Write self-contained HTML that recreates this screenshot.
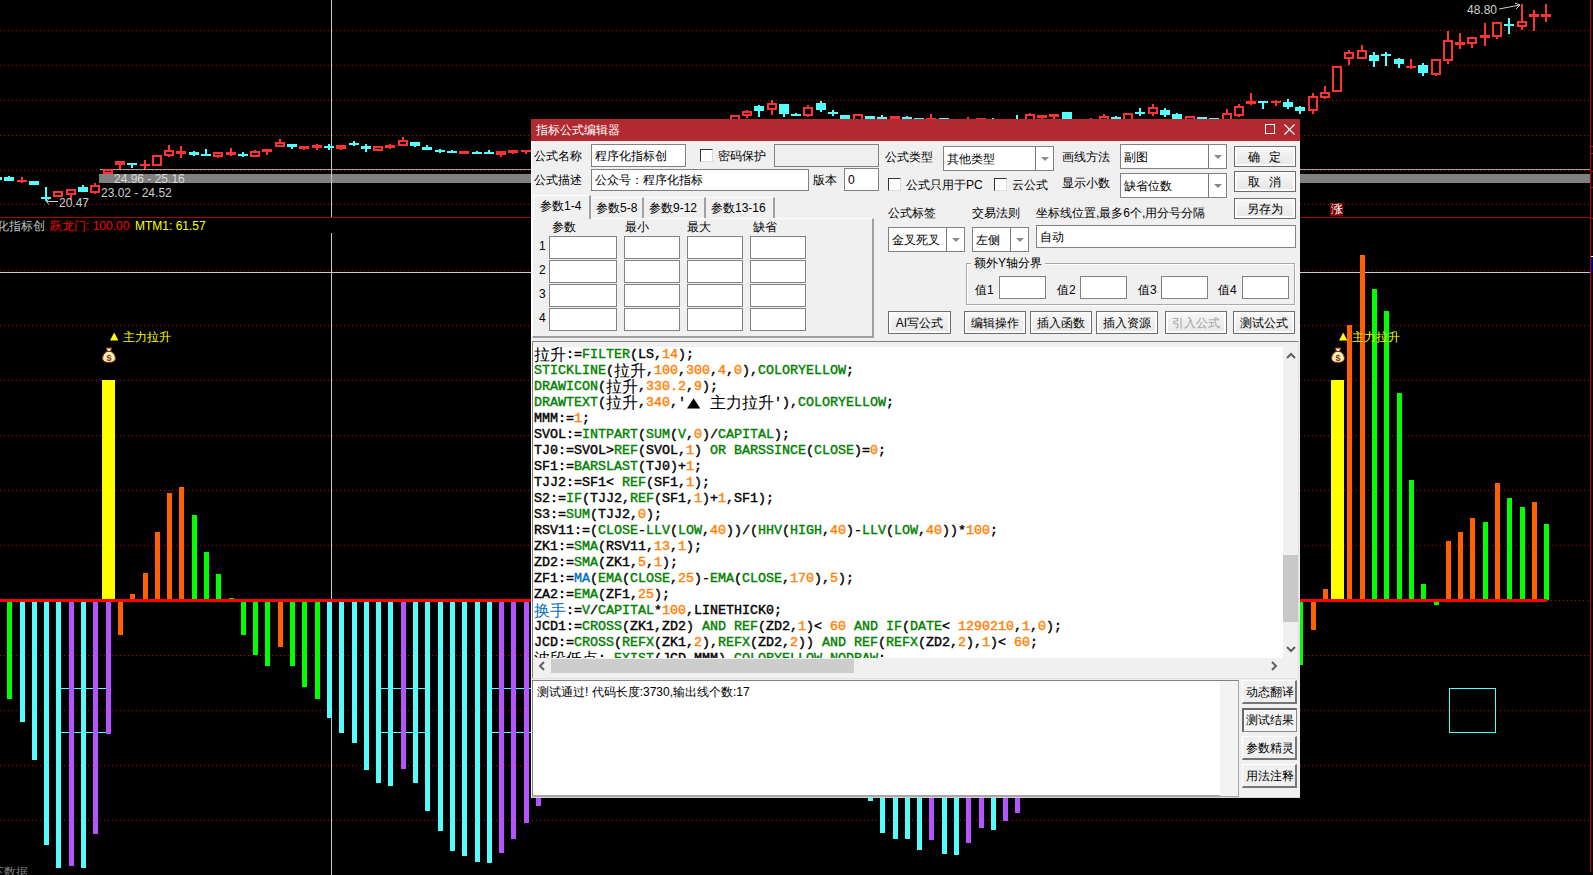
<!DOCTYPE html>
<html><head><meta charset="utf-8"><style>
html,body{margin:0;padding:0;}
body{width:1593px;height:875px;background:#000;position:relative;overflow:hidden;font-family:"Liberation Sans", sans-serif;font-size:12px;}
.t{position:absolute;white-space:nowrap;color:#000;font-size:12px;}
.ct{position:absolute;white-space:nowrap;font-size:11px;}
.code{font-family:"Liberation Mono",monospace;font-size:13.33px;color:#000;-webkit-text-stroke:0.4px currentColor;}
.cl{height:16px;line-height:16px;white-space:pre;}
.cj{display:inline-block;width:16px;font-family:"Liberation Sans",sans-serif;font-size:16px;vertical-align:top;-webkit-text-stroke:0;}
</style></head><body>
<svg width="1593" height="875" style="position:absolute;left:0;top:0" shape-rendering="crispEdges">
<line x1="0" y1="30.5" x2="1590" y2="30.5" stroke="#c00000" stroke-width="1" stroke-dasharray="1 3"/>
<line x1="0" y1="65.5" x2="1590" y2="65.5" stroke="#c00000" stroke-width="1" stroke-dasharray="1 3"/>
<line x1="0" y1="100.5" x2="1590" y2="100.5" stroke="#c00000" stroke-width="1" stroke-dasharray="1 3"/>
<line x1="0" y1="135.5" x2="1590" y2="135.5" stroke="#c00000" stroke-width="1" stroke-dasharray="1 3"/>
<line x1="0" y1="170.5" x2="1590" y2="170.5" stroke="#c00000" stroke-width="1" stroke-dasharray="1 3"/>
<line x1="0" y1="204.5" x2="1590" y2="204.5" stroke="#c00000" stroke-width="1" stroke-dasharray="1 3"/>
<line x1="0" y1="270.5" x2="1590" y2="270.5" stroke="#c00000" stroke-width="1" stroke-dasharray="1 3"/>
<line x1="0" y1="325.5" x2="1590" y2="325.5" stroke="#c00000" stroke-width="1" stroke-dasharray="1 3"/>
<line x1="0" y1="380.5" x2="1590" y2="380.5" stroke="#c00000" stroke-width="1" stroke-dasharray="1 3"/>
<line x1="0" y1="435.5" x2="1590" y2="435.5" stroke="#c00000" stroke-width="1" stroke-dasharray="1 3"/>
<line x1="0" y1="490.5" x2="1590" y2="490.5" stroke="#c00000" stroke-width="1" stroke-dasharray="1 3"/>
<line x1="0" y1="545.5" x2="1590" y2="545.5" stroke="#c00000" stroke-width="1" stroke-dasharray="1 3"/>
<line x1="0" y1="655.5" x2="1590" y2="655.5" stroke="#c00000" stroke-width="1" stroke-dasharray="1 3"/>
<line x1="0" y1="710.5" x2="1590" y2="710.5" stroke="#c00000" stroke-width="1" stroke-dasharray="1 3"/>
<line x1="0" y1="765.5" x2="1590" y2="765.5" stroke="#c00000" stroke-width="1" stroke-dasharray="1 3"/>
<line x1="0" y1="820.5" x2="1590" y2="820.5" stroke="#c00000" stroke-width="1" stroke-dasharray="1 3"/>
<rect x="0" y="217" width="1590" height="1" fill="#b00000"/>
<rect x="1590" y="0" width="1" height="872" fill="#b00000"/>
<rect x="100" y="169" width="1490" height="1" fill="#a0a0a0"/>
<rect x="99" y="174" width="1491" height="9" fill="#808080"/>
<rect x="331" y="0" width="1" height="217" fill="#c8c8c8"/>
<rect x="331" y="233" width="1" height="642" fill="#c8c8c8"/>
<rect x="0" y="272" width="1590" height="1" fill="#c8c8c8"/>
<rect x="-8" y="177" width="10" height="3" fill="#54ffff"/>
<rect x="8" y="176" width="2" height="1" fill="#54ffff"/>
<rect x="4" y="177" width="10" height="4" fill="#54ffff"/>
<rect x="21" y="177" width="2" height="3" fill="#ff3232"/>
<rect x="21" y="182" width="2" height="1" fill="#ff3232"/>
<rect x="17" y="180" width="10" height="2" fill="#ff3232"/>
<rect x="29" y="181" width="10" height="4" fill="#54ffff"/>
<rect x="45" y="187" width="2" height="10" fill="#54ffff"/>
<rect x="45" y="199" width="2" height="2" fill="#54ffff"/>
<rect x="41" y="197" width="10" height="2" fill="#54ffff"/>
<path d="M53 191h10v6h-10zM55 193v2h6v-2z" fill="#ff3232" fill-rule="evenodd"/>
<rect x="70" y="195" width="2" height="5" fill="#ff3232"/>
<path d="M66 189h10v6h-10zM68 191v2h6v-2z" fill="#ff3232" fill-rule="evenodd"/>
<rect x="82" y="185" width="2" height="2" fill="#54ffff"/>
<rect x="78" y="187" width="10" height="5" fill="#54ffff"/>
<rect x="94" y="183" width="2" height="2" fill="#ff3232"/>
<rect x="94" y="193" width="2" height="1" fill="#ff3232"/>
<path d="M90 185h10v8h-10zM92 187v4h6v-4z" fill="#ff3232" fill-rule="evenodd"/>
<path d="M103 169h10v5h-10zM105 171v1h6v-1z" fill="#ff3232" fill-rule="evenodd"/>
<rect x="119" y="165" width="2" height="4" fill="#ff3232"/>
<path d="M115 161h10v4h-10zM117 163v0h6v0z" fill="#ff3232" fill-rule="evenodd"/>
<rect x="131" y="165" width="2" height="3" fill="#54ffff"/>
<rect x="127" y="163" width="10" height="2" fill="#54ffff"/>
<rect x="144" y="160" width="2" height="4" fill="#ff3232"/>
<rect x="144" y="166" width="2" height="3" fill="#ff3232"/>
<rect x="140" y="164" width="10" height="2" fill="#ff3232"/>
<path d="M152 155h10v11h-10zM154 157v7h6v-7z" fill="#ff3232" fill-rule="evenodd"/>
<rect x="168" y="145" width="2" height="5" fill="#ff3232"/>
<rect x="168" y="156" width="2" height="1" fill="#ff3232"/>
<path d="M164 150h10v6h-10zM166 152v2h6v-2z" fill="#ff3232" fill-rule="evenodd"/>
<rect x="180" y="146" width="2" height="5" fill="#ff3232"/>
<rect x="180" y="154" width="2" height="4" fill="#ff3232"/>
<rect x="176" y="151" width="10" height="3" fill="#ff3232"/>
<rect x="193" y="151" width="2" height="1" fill="#54ffff"/>
<rect x="193" y="155" width="2" height="1" fill="#54ffff"/>
<rect x="189" y="152" width="10" height="3" fill="#54ffff"/>
<rect x="205" y="149" width="2" height="5" fill="#54ffff"/>
<rect x="205" y="156" width="2" height="0" fill="#54ffff"/>
<rect x="201" y="154" width="10" height="2" fill="#54ffff"/>
<rect x="217" y="157" width="2" height="1" fill="#ff3232"/>
<path d="M213 152h10v5h-10zM215 154v1h6v-1z" fill="#ff3232" fill-rule="evenodd"/>
<rect x="230" y="148" width="2" height="4" fill="#ff3232"/>
<rect x="230" y="155" width="2" height="1" fill="#ff3232"/>
<rect x="226" y="152" width="10" height="3" fill="#ff3232"/>
<rect x="242" y="152" width="2" height="2" fill="#54ffff"/>
<rect x="242" y="156" width="2" height="1" fill="#54ffff"/>
<rect x="238" y="154" width="10" height="2" fill="#54ffff"/>
<rect x="254" y="150" width="2" height="1" fill="#ff3232"/>
<path d="M250 151h10v6h-10zM252 153v2h6v-2z" fill="#ff3232" fill-rule="evenodd"/>
<rect x="266" y="152" width="2" height="3" fill="#ff3232"/>
<rect x="262" y="149" width="10" height="3" fill="#ff3232"/>
<rect x="279" y="139" width="2" height="3" fill="#ff3232"/>
<path d="M275 142h10v5h-10zM277 144v1h6v-1z" fill="#ff3232" fill-rule="evenodd"/>
<rect x="291" y="147" width="2" height="2" fill="#54ffff"/>
<rect x="287" y="144" width="10" height="3" fill="#54ffff"/>
<rect x="303" y="149" width="2" height="1" fill="#ff3232"/>
<rect x="299" y="146" width="10" height="3" fill="#ff3232"/>
<rect x="316" y="144" width="2" height="1" fill="#ff3232"/>
<rect x="316" y="148" width="2" height="2" fill="#ff3232"/>
<rect x="312" y="145" width="10" height="3" fill="#ff3232"/>
<rect x="328" y="144" width="2" height="2" fill="#54ffff"/>
<rect x="328" y="148" width="2" height="2" fill="#54ffff"/>
<rect x="324" y="146" width="10" height="2" fill="#54ffff"/>
<rect x="340" y="149" width="2" height="1" fill="#ff3232"/>
<rect x="336" y="145" width="10" height="4" fill="#ff3232"/>
<rect x="353" y="141" width="2" height="2" fill="#54ffff"/>
<rect x="353" y="145" width="2" height="1" fill="#54ffff"/>
<rect x="349" y="143" width="10" height="2" fill="#54ffff"/>
<rect x="365" y="144" width="2" height="2" fill="#54ffff"/>
<rect x="365" y="149" width="2" height="3" fill="#54ffff"/>
<rect x="361" y="146" width="10" height="3" fill="#54ffff"/>
<path d="M373 146h10v5h-10zM375 148v1h6v-1z" fill="#ff3232" fill-rule="evenodd"/>
<rect x="389" y="144" width="2" height="1" fill="#ff3232"/>
<rect x="389" y="148" width="2" height="1" fill="#ff3232"/>
<rect x="385" y="145" width="10" height="3" fill="#ff3232"/>
<rect x="402" y="137" width="2" height="3" fill="#ff3232"/>
<path d="M398 140h10v6h-10zM400 142v2h6v-2z" fill="#ff3232" fill-rule="evenodd"/>
<rect x="414" y="146" width="2" height="1" fill="#54ffff"/>
<rect x="410" y="142" width="10" height="4" fill="#54ffff"/>
<rect x="426" y="145" width="2" height="2" fill="#54ffff"/>
<rect x="422" y="147" width="10" height="3" fill="#54ffff"/>
<rect x="439" y="149" width="2" height="1" fill="#54ffff"/>
<rect x="439" y="152" width="2" height="1" fill="#54ffff"/>
<rect x="435" y="150" width="10" height="2" fill="#54ffff"/>
<rect x="451" y="150" width="2" height="1" fill="#54ffff"/>
<rect x="447" y="151" width="10" height="2" fill="#54ffff"/>
<rect x="459" y="151" width="10" height="3" fill="#ff3232"/>
<rect x="476" y="151" width="2" height="1" fill="#54ffff"/>
<rect x="476" y="154" width="2" height="0" fill="#54ffff"/>
<rect x="472" y="152" width="10" height="2" fill="#54ffff"/>
<rect x="488" y="150" width="2" height="2" fill="#54ffff"/>
<rect x="484" y="152" width="10" height="2" fill="#54ffff"/>
<rect x="500" y="155" width="2" height="2" fill="#ff3232"/>
<rect x="496" y="151" width="10" height="4" fill="#ff3232"/>
<rect x="512" y="153" width="2" height="1" fill="#ff3232"/>
<rect x="508" y="150" width="10" height="3" fill="#ff3232"/>
<rect x="525" y="150" width="2" height="0" fill="#ff3232"/>
<rect x="525" y="152" width="2" height="2" fill="#ff3232"/>
<rect x="521" y="150" width="10" height="2" fill="#ff3232"/>
<path d="M730 115h10v10h-10zM732 117v6h6v-6z" fill="#ff3232" fill-rule="evenodd"/>
<rect x="746" y="110" width="2" height="1" fill="#ff3232"/>
<rect x="746" y="116" width="2" height="2" fill="#ff3232"/>
<path d="M742 111h10v5h-10zM744 113v1h6v-1z" fill="#ff3232" fill-rule="evenodd"/>
<rect x="758" y="105" width="2" height="1" fill="#54ffff"/>
<rect x="758" y="111" width="2" height="6" fill="#54ffff"/>
<rect x="754" y="106" width="10" height="5" fill="#54ffff"/>
<rect x="771" y="100" width="2" height="3" fill="#ff3232"/>
<rect x="771" y="110" width="2" height="5" fill="#ff3232"/>
<path d="M767 103h10v7h-10zM769 105v3h6v-3z" fill="#ff3232" fill-rule="evenodd"/>
<rect x="783" y="114" width="2" height="3" fill="#54ffff"/>
<rect x="779" y="104" width="10" height="10" fill="#54ffff"/>
<rect x="795" y="113" width="2" height="1" fill="#54ffff"/>
<rect x="795" y="116" width="2" height="0" fill="#54ffff"/>
<rect x="791" y="114" width="10" height="2" fill="#54ffff"/>
<rect x="807" y="105" width="2" height="2" fill="#ff3232"/>
<rect x="807" y="116" width="2" height="1" fill="#ff3232"/>
<path d="M803 107h10v9h-10zM805 109v5h6v-5z" fill="#ff3232" fill-rule="evenodd"/>
<rect x="820" y="101" width="2" height="2" fill="#54ffff"/>
<rect x="820" y="110" width="2" height="2" fill="#54ffff"/>
<rect x="816" y="103" width="10" height="7" fill="#54ffff"/>
<rect x="832" y="110" width="2" height="2" fill="#54ffff"/>
<rect x="832" y="114" width="2" height="2" fill="#54ffff"/>
<rect x="828" y="112" width="10" height="2" fill="#54ffff"/>
<rect x="840" y="115" width="10" height="10" fill="#54ffff"/>
<path d="M853 114h10v11h-10zM855 116v7h6v-7z" fill="#ff3232" fill-rule="evenodd"/>
<rect x="865" y="116" width="10" height="9" fill="#54ffff"/>
<rect x="881" y="115" width="2" height="2" fill="#54ffff"/>
<rect x="877" y="117" width="10" height="8" fill="#54ffff"/>
<rect x="890" y="116" width="10" height="9" fill="#ff3232"/>
<rect x="906" y="116" width="2" height="1" fill="#54ffff"/>
<rect x="906" y="119" width="2" height="6" fill="#54ffff"/>
<rect x="902" y="117" width="10" height="2" fill="#54ffff"/>
<rect x="914" y="118" width="10" height="7" fill="#54ffff"/>
<rect x="930" y="114" width="2" height="4" fill="#ff3232"/>
<rect x="926" y="118" width="10" height="7" fill="#ff3232"/>
<rect x="939" y="118" width="10" height="7" fill="#54ffff"/>
<rect x="967" y="117" width="2" height="8" fill="#ff3232"/>
<rect x="976" y="118" width="10" height="7" fill="#ff3232"/>
<rect x="992" y="118" width="2" height="7" fill="#54ffff"/>
<rect x="1016" y="115" width="2" height="10" fill="#54ffff"/>
<rect x="1029" y="113" width="2" height="1" fill="#ff3232"/>
<path d="M1025 114h10v11h-10zM1027 116v7h6v-7z" fill="#ff3232" fill-rule="evenodd"/>
<rect x="1041" y="118" width="2" height="7" fill="#ff3232"/>
<rect x="1037" y="115" width="10" height="3" fill="#ff3232"/>
<rect x="1053" y="117" width="2" height="8" fill="#ff3232"/>
<rect x="1049" y="114" width="10" height="3" fill="#ff3232"/>
<rect x="1062" y="112" width="10" height="13" fill="#54ffff"/>
<rect x="1090" y="118" width="2" height="7" fill="#ff3232"/>
<rect x="1103" y="114" width="2" height="2" fill="#ff3232"/>
<path d="M1099 116h10v9h-10zM1101 118v5h6v-5z" fill="#ff3232" fill-rule="evenodd"/>
<rect x="1115" y="116" width="2" height="1" fill="#54ffff"/>
<rect x="1115" y="119" width="2" height="6" fill="#54ffff"/>
<rect x="1111" y="117" width="10" height="2" fill="#54ffff"/>
<path d="M1123 113h10v12h-10zM1125 115v8h6v-8z" fill="#ff3232" fill-rule="evenodd"/>
<rect x="1139" y="108" width="2" height="4" fill="#54ffff"/>
<rect x="1139" y="114" width="2" height="2" fill="#54ffff"/>
<rect x="1135" y="112" width="10" height="2" fill="#54ffff"/>
<rect x="1152" y="104" width="2" height="3" fill="#ff3232"/>
<rect x="1152" y="114" width="2" height="2" fill="#ff3232"/>
<path d="M1148 107h10v7h-10zM1150 109v3h6v-3z" fill="#ff3232" fill-rule="evenodd"/>
<rect x="1164" y="108" width="2" height="2" fill="#54ffff"/>
<rect x="1164" y="115" width="2" height="2" fill="#54ffff"/>
<rect x="1160" y="110" width="10" height="5" fill="#54ffff"/>
<rect x="1176" y="113" width="2" height="1" fill="#54ffff"/>
<rect x="1172" y="114" width="10" height="11" fill="#54ffff"/>
<path d="M1185 116h10v9h-10zM1187 118v5h6v-5z" fill="#ff3232" fill-rule="evenodd"/>
<rect x="1197" y="117" width="10" height="8" fill="#54ffff"/>
<rect x="1209" y="118" width="10" height="7" fill="#54ffff"/>
<rect x="1226" y="109" width="2" height="4" fill="#ff3232"/>
<path d="M1222 113h10v12h-10zM1224 115v8h6v-8z" fill="#ff3232" fill-rule="evenodd"/>
<rect x="1238" y="104" width="2" height="2" fill="#ff3232"/>
<rect x="1238" y="116" width="2" height="1" fill="#ff3232"/>
<path d="M1234 106h10v10h-10zM1236 108v6h6v-6z" fill="#ff3232" fill-rule="evenodd"/>
<rect x="1250" y="93" width="2" height="8" fill="#ff3232"/>
<rect x="1250" y="104" width="2" height="1" fill="#ff3232"/>
<rect x="1246" y="101" width="10" height="3" fill="#ff3232"/>
<rect x="1262" y="103" width="2" height="6" fill="#54ffff"/>
<rect x="1258" y="101" width="10" height="2" fill="#54ffff"/>
<rect x="1275" y="100" width="2" height="1" fill="#ff3232"/>
<rect x="1275" y="103" width="2" height="3" fill="#ff3232"/>
<rect x="1271" y="101" width="10" height="2" fill="#ff3232"/>
<rect x="1287" y="99" width="2" height="3" fill="#54ffff"/>
<rect x="1287" y="107" width="2" height="2" fill="#54ffff"/>
<rect x="1283" y="102" width="10" height="5" fill="#54ffff"/>
<rect x="1299" y="106" width="2" height="1" fill="#54ffff"/>
<rect x="1299" y="111" width="2" height="3" fill="#54ffff"/>
<rect x="1295" y="107" width="10" height="4" fill="#54ffff"/>
<rect x="1312" y="93" width="2" height="3" fill="#ff3232"/>
<rect x="1312" y="111" width="2" height="3" fill="#ff3232"/>
<path d="M1308 96h10v15h-10zM1310 98v11h6v-11z" fill="#ff3232" fill-rule="evenodd"/>
<rect x="1324" y="86" width="2" height="6" fill="#ff3232"/>
<rect x="1324" y="98" width="2" height="1" fill="#ff3232"/>
<path d="M1320 92h10v6h-10zM1322 94v2h6v-2z" fill="#ff3232" fill-rule="evenodd"/>
<path d="M1332 66h10v26h-10zM1334 68v22h6v-22z" fill="#ff3232" fill-rule="evenodd"/>
<rect x="1348" y="50" width="2" height="2" fill="#ff3232"/>
<rect x="1348" y="59" width="2" height="6" fill="#ff3232"/>
<path d="M1344 52h10v7h-10zM1346 54v3h6v-3z" fill="#ff3232" fill-rule="evenodd"/>
<rect x="1361" y="45" width="2" height="5" fill="#ff3232"/>
<path d="M1357 50h10v9h-10zM1359 52v5h6v-5z" fill="#ff3232" fill-rule="evenodd"/>
<rect x="1373" y="52" width="2" height="3" fill="#54ffff"/>
<rect x="1373" y="61" width="2" height="6" fill="#54ffff"/>
<rect x="1369" y="55" width="10" height="6" fill="#54ffff"/>
<rect x="1385" y="52" width="2" height="2" fill="#54ffff"/>
<rect x="1385" y="56" width="2" height="10" fill="#54ffff"/>
<rect x="1381" y="54" width="10" height="2" fill="#54ffff"/>
<rect x="1398" y="58" width="2" height="1" fill="#54ffff"/>
<rect x="1398" y="64" width="2" height="4" fill="#54ffff"/>
<rect x="1394" y="59" width="10" height="5" fill="#54ffff"/>
<rect x="1410" y="59" width="2" height="7" fill="#ff3232"/>
<rect x="1410" y="68" width="2" height="1" fill="#ff3232"/>
<rect x="1406" y="66" width="10" height="2" fill="#ff3232"/>
<rect x="1422" y="63" width="2" height="2" fill="#54ffff"/>
<rect x="1422" y="73" width="2" height="3" fill="#54ffff"/>
<rect x="1418" y="65" width="10" height="8" fill="#54ffff"/>
<rect x="1435" y="75" width="2" height="1" fill="#ff3232"/>
<path d="M1431 59h10v16h-10zM1433 61v12h6v-12z" fill="#ff3232" fill-rule="evenodd"/>
<rect x="1447" y="31" width="2" height="9" fill="#ff3232"/>
<rect x="1447" y="61" width="2" height="3" fill="#ff3232"/>
<path d="M1443 40h10v21h-10zM1445 42v17h6v-17z" fill="#ff3232" fill-rule="evenodd"/>
<rect x="1459" y="33" width="2" height="9" fill="#ff3232"/>
<rect x="1459" y="45" width="2" height="4" fill="#ff3232"/>
<rect x="1455" y="42" width="10" height="3" fill="#ff3232"/>
<rect x="1471" y="44" width="2" height="4" fill="#ff3232"/>
<path d="M1467 37h10v7h-10zM1469 39v3h6v-3z" fill="#ff3232" fill-rule="evenodd"/>
<rect x="1484" y="23" width="2" height="12" fill="#ff3232"/>
<rect x="1484" y="38" width="2" height="8" fill="#ff3232"/>
<rect x="1480" y="35" width="10" height="3" fill="#ff3232"/>
<rect x="1496" y="37" width="2" height="2" fill="#ff3232"/>
<path d="M1492 22h10v15h-10zM1494 24v11h6v-11z" fill="#ff3232" fill-rule="evenodd"/>
<rect x="1508" y="18" width="2" height="6" fill="#54ffff"/>
<rect x="1508" y="26" width="2" height="8" fill="#54ffff"/>
<rect x="1504" y="24" width="10" height="2" fill="#54ffff"/>
<rect x="1521" y="4" width="2" height="17" fill="#ff3232"/>
<rect x="1521" y="27" width="2" height="3" fill="#ff3232"/>
<path d="M1517 21h10v6h-10zM1519 23v2h6v-2z" fill="#ff3232" fill-rule="evenodd"/>
<rect x="1533" y="10" width="2" height="4" fill="#ff3232"/>
<rect x="1533" y="17" width="2" height="14" fill="#ff3232"/>
<rect x="1529" y="14" width="10" height="3" fill="#ff3232"/>
<rect x="1545" y="4" width="2" height="10" fill="#ff3232"/>
<rect x="1545" y="17" width="2" height="5" fill="#ff3232"/>
<rect x="1541" y="14" width="10" height="3" fill="#ff3232"/>
<rect x="61" y="688" width="45" height="1" fill="#54fcfc"/><rect x="61" y="732" width="45" height="1" fill="#54fcfc"/>
<rect x="381" y="688" width="44" height="1" fill="#54fcfc"/><rect x="381" y="732" width="44" height="1" fill="#54fcfc"/>
<rect x="492" y="688" width="68" height="1" fill="#54fcfc"/><rect x="492" y="732" width="68" height="1" fill="#54fcfc"/>
<rect x="1449.5" y="688.5" width="46" height="44" fill="none" stroke="#54fcfc" stroke-width="1"/>
<rect x="130" y="594" width="5" height="6" fill="#ff6000"/>
<rect x="143" y="573" width="5" height="27" fill="#ff6000"/>
<rect x="155" y="532" width="5" height="68" fill="#ff6000"/>
<rect x="167" y="493" width="5" height="107" fill="#ff6000"/>
<rect x="179" y="487" width="5" height="113" fill="#ff6000"/>
<rect x="192" y="515" width="5" height="85" fill="#00ff00"/>
<rect x="204" y="552" width="5" height="48" fill="#00ff00"/>
<rect x="216" y="574" width="5" height="26" fill="#00ff00"/>
<rect x="229" y="598" width="5" height="2" fill="#00ff00"/>
<rect x="1323" y="589" width="5" height="11" fill="#ff6000"/>
<rect x="1347" y="325" width="5" height="275" fill="#ff6000"/>
<rect x="1360" y="255" width="5" height="345" fill="#ff6000"/>
<rect x="1372" y="289" width="5" height="311" fill="#00ff00"/>
<rect x="1384" y="311" width="5" height="289" fill="#00ff00"/>
<rect x="1397" y="393" width="5" height="207" fill="#00ff00"/>
<rect x="1409" y="480" width="5" height="120" fill="#00ff00"/>
<rect x="1421" y="584" width="5" height="16" fill="#00ff00"/>
<rect x="1446" y="541" width="5" height="59" fill="#ff6000"/>
<rect x="1458" y="532" width="5" height="68" fill="#ff6000"/>
<rect x="1470" y="518" width="5" height="82" fill="#ff6000"/>
<rect x="1483" y="522" width="5" height="78" fill="#00ff00"/>
<rect x="1495" y="483" width="5" height="117" fill="#ff6000"/>
<rect x="1507" y="498" width="5" height="102" fill="#00ff00"/>
<rect x="1520" y="507" width="5" height="93" fill="#00ff00"/>
<rect x="1532" y="502" width="5" height="98" fill="#ff6000"/>
<rect x="1544" y="524" width="5" height="76" fill="#00ff00"/>
<rect x="7" y="601" width="5" height="98" fill="#00ff00"/>
<rect x="20" y="601" width="5" height="121" fill="#54fcfc"/>
<rect x="32" y="601" width="5" height="159" fill="#54fcfc"/>
<rect x="44" y="601" width="5" height="244" fill="#54fcfc"/>
<rect x="56" y="601" width="5" height="267" fill="#54fcfc"/>
<rect x="69" y="601" width="5" height="265" fill="#b454ff"/>
<rect x="81" y="601" width="5" height="267" fill="#54fcfc"/>
<rect x="93" y="601" width="5" height="233" fill="#b454ff"/>
<rect x="106" y="601" width="5" height="133" fill="#b454ff"/>
<rect x="118" y="601" width="5" height="34" fill="#ff6000"/>
<rect x="241" y="601" width="5" height="34" fill="#00ff00"/>
<rect x="253" y="601" width="5" height="54" fill="#00ff00"/>
<rect x="265" y="601" width="5" height="65" fill="#00ff00"/>
<rect x="278" y="601" width="5" height="46" fill="#ff6000"/>
<rect x="290" y="601" width="5" height="65" fill="#00ff00"/>
<rect x="302" y="601" width="5" height="86" fill="#00ff00"/>
<rect x="315" y="601" width="5" height="98" fill="#00ff00"/>
<rect x="327" y="601" width="5" height="117" fill="#54fcfc"/>
<rect x="339" y="601" width="5" height="132" fill="#54fcfc"/>
<rect x="352" y="601" width="5" height="142" fill="#54fcfc"/>
<rect x="364" y="601" width="5" height="169" fill="#54fcfc"/>
<rect x="376" y="601" width="5" height="182" fill="#54fcfc"/>
<rect x="388" y="601" width="5" height="185" fill="#54fcfc"/>
<rect x="401" y="601" width="5" height="168" fill="#b454ff"/>
<rect x="413" y="601" width="5" height="182" fill="#54fcfc"/>
<rect x="425" y="601" width="5" height="210" fill="#54fcfc"/>
<rect x="438" y="601" width="5" height="230" fill="#54fcfc"/>
<rect x="450" y="601" width="5" height="250" fill="#54fcfc"/>
<rect x="462" y="601" width="5" height="255" fill="#54fcfc"/>
<rect x="475" y="601" width="5" height="261" fill="#54fcfc"/>
<rect x="487" y="601" width="5" height="262" fill="#54fcfc"/>
<rect x="499" y="601" width="5" height="252" fill="#b454ff"/>
<rect x="511" y="601" width="5" height="238" fill="#b454ff"/>
<rect x="524" y="601" width="5" height="222" fill="#b454ff"/>
<rect x="536" y="601" width="5" height="205" fill="#b454ff"/>
<rect x="868" y="601" width="5" height="200" fill="#54fcfc"/>
<rect x="880" y="601" width="5" height="232" fill="#54fcfc"/>
<rect x="893" y="601" width="5" height="238" fill="#54fcfc"/>
<rect x="905" y="601" width="5" height="238" fill="#54fcfc"/>
<rect x="917" y="601" width="5" height="249" fill="#54fcfc"/>
<rect x="929" y="601" width="5" height="239" fill="#b454ff"/>
<rect x="942" y="601" width="5" height="253" fill="#54fcfc"/>
<rect x="954" y="601" width="5" height="254" fill="#54fcfc"/>
<rect x="966" y="601" width="5" height="242" fill="#b454ff"/>
<rect x="979" y="601" width="5" height="227" fill="#b454ff"/>
<rect x="991" y="601" width="5" height="229" fill="#54fcfc"/>
<rect x="1003" y="601" width="5" height="220" fill="#b454ff"/>
<rect x="1015" y="601" width="5" height="212" fill="#b454ff"/>
<rect x="1298" y="601" width="5" height="64" fill="#00ff00"/>
<rect x="1311" y="601" width="5" height="29" fill="#ff6000"/>
<rect x="1434" y="601" width="5" height="4" fill="#00ff00"/>
<rect x="102" y="380" width="13" height="220" fill="#ffff00"/>
<rect x="1331" y="380" width="13" height="220" fill="#ffff00"/>
<rect x="0" y="599" width="1547" height="3" fill="#ff0000"/>
<line x1="1547" y1="600.5" x2="1590" y2="600.5" stroke="#c00000" stroke-width="1" stroke-dasharray="1 3"/>
</svg>
<div class="ct" style="left:114px;top:172px;line-height:14px;font-size:12px;color:#d8d8d8;">24.96 - 25.16</div><div class="ct" style="left:101px;top:185.5px;line-height:14px;font-size:12px;color:#d0d0d0;">23.02 - 24.52</div><div class="ct" style="left:59px;top:195.5px;line-height:14px;font-size:12px;color:#d0d0d0;">20.47</div><svg style="position:absolute;left:45px;top:197px" width="14" height="9"><path d="M1.5 4.5H13M4 1.5L1.5 4.5L4 7.5" stroke="#d0d0d0" stroke-width="1" fill="none"/></svg><div class="ct" style="left:1467px;top:2.5px;line-height:14px;font-size:12px;color:#d0d0d0;">48.80</div><svg style="position:absolute;left:1498px;top:2px" width="24" height="10"><path d="M1 7L22 3M17 1L22 3L18 7" stroke="#d0d0d0" stroke-width="1" fill="none"/></svg><div class="ct" style="left:-3px;top:219px;line-height:14px;font-size:12px;color:#c0c0c0;">化指标创</div><div class="ct" style="left:50px;top:219px;line-height:14px;font-size:12px;color:#ff0000;">跃龙门: 100.00</div><div class="ct" style="left:135px;top:219px;line-height:14px;font-size:12px;color:#ffff00;">MTM1: 61.57</div><div style="position:absolute;left:1330px;top:203px;width:13px;height:13px;background:#800000;color:#fff;font-size:12px;line-height:13px;text-align:center">涨</div><svg style="position:absolute;left:110px;top:332px" width="10" height="9"><path d="M0 8.5L4.2 0.5L8.4 8.5Z" fill="#ffff00"/></svg><div class="ct" style="left:122.5px;top:329.5px;line-height:14px;font-size:12px;color:#ffff00;">主力拉升</div><svg style="position:absolute;left:102px;top:347px" width="14" height="16"><path d="M4 1H10L8.5 4Q13.5 7 13.5 11Q13.5 15.5 7 15.5Q0.5 15.5 0.5 11Q0.5 7 5.5 4Z" fill="#fff2a8" stroke="#7a2a2a" stroke-width="1"/><path d="M5 4.5H9" stroke="#7a2a2a"/><text x="7" y="13.5" font-size="9" font-weight="bold" text-anchor="middle" fill="#8a2a3a" font-family="Liberation Sans">$</text></svg><svg style="position:absolute;left:1339px;top:332px" width="10" height="9"><path d="M0 8.5L4.2 0.5L8.4 8.5Z" fill="#ffff00"/></svg><div class="ct" style="left:1351.5px;top:329.5px;line-height:14px;font-size:12px;color:#ffff00;">主力拉升</div><svg style="position:absolute;left:1331px;top:347px" width="14" height="16"><path d="M4 1H10L8.5 4Q13.5 7 13.5 11Q13.5 15.5 7 15.5Q0.5 15.5 0.5 11Q0.5 7 5.5 4Z" fill="#fff2a8" stroke="#7a2a2a" stroke-width="1"/><path d="M5 4.5H9" stroke="#7a2a2a"/><text x="7" y="13.5" font-size="9" font-weight="bold" text-anchor="middle" fill="#8a2a3a" font-family="Liberation Sans">$</text></svg><div class="ct" style="left:-8px;top:865px;line-height:14px;font-size:12px;color:#808080;">下数据</div><div style="position:absolute;left:1591px;top:146px;width:2px;height:1px;background:#b00000"></div><div style="position:absolute;left:1591px;top:153px;width:2px;height:1px;background:#b00000"></div><div style="position:absolute;left:1591px;top:171px;width:2px;height:1px;background:#b00000"></div><div style="position:absolute;left:1591px;top:187px;width:2px;height:1px;background:#b00000"></div><div style="position:absolute;left:1591px;top:218px;width:2px;height:1px;background:#b00000"></div><div style="position:absolute;left:1591px;top:256px;width:2px;height:16px;background:#000080;border-top:1px solid #fff"></div>
<div style="position:absolute;left:531px;top:119px;width:769px;height:679px;box-sizing:border-box;background:#f0f0f0;border-left:1px solid #fff;border-bottom:1px solid #d4d4d4;"></div>
<div style="position:absolute;left:531px;top:119px;width:769px;height:22px;box-sizing:border-box;background:#b22a30;"></div>
<div class="t" style="left:536px;top:122.0px;line-height:16px;color:#fff;">指标公式编辑器</div>
<div style="position:absolute;left:1265px;top:124px;width:10px;height:10px;box-sizing:border-box;border:1px solid #fff;"></div>
<svg style="position:absolute;left:1284px;top:124px" width="11" height="11"><path d="M0.5 0.5L10.5 10.5M10.5 0.5L0.5 10.5" stroke="#fff" stroke-width="1.1"/></svg>
<div class="t" style="left:534px;top:147.5px;line-height:16px;">公式名称</div>
<div style="position:absolute;left:591px;top:144px;width:95px;height:23px;box-sizing:border-box;background:#fff;border:1px solid #828282;"></div><div class="t" style="left:595px;top:147.5px;line-height:16px;">程序化指标创</div>
<div style="position:absolute;left:700px;top:149px;width:13px;height:13px;box-sizing:border-box;background:#fff;border:1px solid #333;border-right-color:#ddd;border-bottom-color:#ddd;"></div>
<div class="t" style="left:718px;top:147.5px;line-height:16px;">密码保护</div>
<div style="position:absolute;left:774px;top:144px;width:105px;height:23px;box-sizing:border-box;background:#f0f0f0;border:1px solid #828282;"></div>
<div class="t" style="left:534px;top:172.0px;line-height:16px;">公式描述</div>
<div style="position:absolute;left:591px;top:169px;width:218px;height:22px;box-sizing:border-box;background:#fff;border:1px solid #828282;"></div><div class="t" style="left:595px;top:172.0px;line-height:16px;">公众号：程序化指标</div>
<div class="t" style="left:813px;top:172.0px;line-height:16px;">版本</div>
<div style="position:absolute;left:844px;top:168px;width:35px;height:23px;box-sizing:border-box;background:#fff;border:1px solid #828282;"></div><div class="t" style="left:848px;top:171.5px;line-height:16px;">0</div>
<div class="t" style="left:885px;top:149.0px;line-height:16px;">公式类型</div>
<div style="position:absolute;left:943px;top:146px;width:111px;height:25px;box-sizing:border-box;background:#fff;border:1px solid #828282;"></div><div style="position:absolute;left:1035px;top:146px;width:1px;height:25px;box-sizing:border-box;background:#7a7a7a;"></div><div style="position:absolute;left:1040.5px;top:157.0px;width:0;height:0;border-left:4px solid transparent;border-right:4px solid transparent;border-top:4px solid #8a8a8a"></div><div class="t" style="left:947px;top:150.5px;line-height:16px;">其他类型</div>
<div class="t" style="left:1062px;top:149.0px;line-height:16px;">画线方法</div>
<div style="position:absolute;left:1120px;top:144px;width:107px;height:25px;box-sizing:border-box;background:#fff;border:1px solid #828282;"></div><div style="position:absolute;left:1208px;top:144px;width:1px;height:25px;box-sizing:border-box;background:#7a7a7a;"></div><div style="position:absolute;left:1213.5px;top:155.0px;width:0;height:0;border-left:4px solid transparent;border-right:4px solid transparent;border-top:4px solid #8a8a8a"></div><div class="t" style="left:1124px;top:148.5px;line-height:16px;">副图</div>
<div style="position:absolute;left:1234px;top:146px;width:62px;height:21px;box-sizing:border-box;background:linear-gradient(#f8f8f8,#e6e6e6);border:1px solid #6e6e6e;box-shadow:inset 0 0 0 2px #fbfbfb;"></div><div class="t" style="left:1234px;width:62px;text-align:center;top:148.5px;line-height:16px;color:#000;letter-spacing:1px">确&nbsp;&nbsp;定</div>
<div style="position:absolute;left:888px;top:178px;width:13px;height:13px;box-sizing:border-box;background:#fff;border:1px solid #333;border-right-color:#ddd;border-bottom-color:#ddd;"></div>
<div class="t" style="left:906px;top:176.5px;line-height:16px;">公式只用于PC</div>
<div style="position:absolute;left:994px;top:178px;width:13px;height:13px;box-sizing:border-box;background:#fff;border:1px solid #333;border-right-color:#ddd;border-bottom-color:#ddd;"></div>
<div class="t" style="left:1012px;top:176.5px;line-height:16px;">云公式</div>
<div class="t" style="left:1062px;top:174.5px;line-height:16px;">显示小数</div>
<div style="position:absolute;left:1120px;top:173px;width:107px;height:25px;box-sizing:border-box;background:#fff;border:1px solid #828282;"></div><div style="position:absolute;left:1208px;top:173px;width:1px;height:25px;box-sizing:border-box;background:#7a7a7a;"></div><div style="position:absolute;left:1213.5px;top:184.0px;width:0;height:0;border-left:4px solid transparent;border-right:4px solid transparent;border-top:4px solid #8a8a8a"></div><div class="t" style="left:1124px;top:177.5px;line-height:16px;">缺省位数</div>
<div style="position:absolute;left:1234px;top:171px;width:62px;height:21px;box-sizing:border-box;background:linear-gradient(#f8f8f8,#e6e6e6);border:1px solid #6e6e6e;box-shadow:inset 0 0 0 2px #fbfbfb;"></div><div class="t" style="left:1234px;width:62px;text-align:center;top:173.5px;line-height:16px;color:#000;letter-spacing:1px">取&nbsp;&nbsp;消</div>
<div style="position:absolute;left:1234px;top:198px;width:62px;height:21px;box-sizing:border-box;background:linear-gradient(#f8f8f8,#e6e6e6);border:1px solid #6e6e6e;box-shadow:inset 0 0 0 2px #fbfbfb;"></div><div class="t" style="left:1234px;width:62px;text-align:center;top:200.5px;line-height:16px;color:#000;letter-spacing:0px">另存为</div>
<div class="t" style="left:888px;top:205.0px;line-height:16px;">公式标签</div>
<div class="t" style="left:972px;top:205.0px;line-height:16px;">交易法则</div>
<div class="t" style="left:1036px;top:205.0px;line-height:16px;">坐标线位置,最多6个,用分号分隔</div>
<div style="position:absolute;left:888px;top:227px;width:77px;height:25px;box-sizing:border-box;background:#fff;border:1px solid #828282;"></div><div style="position:absolute;left:946px;top:227px;width:1px;height:25px;box-sizing:border-box;background:#7a7a7a;"></div><div style="position:absolute;left:951.5px;top:238.0px;width:0;height:0;border-left:4px solid transparent;border-right:4px solid transparent;border-top:4px solid #8a8a8a"></div><div class="t" style="left:892px;top:231.5px;line-height:16px;">金叉死叉</div>
<div style="position:absolute;left:972px;top:227px;width:57px;height:25px;box-sizing:border-box;background:#fff;border:1px solid #828282;"></div><div style="position:absolute;left:1010px;top:227px;width:1px;height:25px;box-sizing:border-box;background:#7a7a7a;"></div><div style="position:absolute;left:1015.5px;top:238.0px;width:0;height:0;border-left:4px solid transparent;border-right:4px solid transparent;border-top:4px solid #8a8a8a"></div><div class="t" style="left:976px;top:231.5px;line-height:16px;">左侧</div>
<div style="position:absolute;left:1036px;top:225px;width:260px;height:23px;box-sizing:border-box;background:#fff;border:1px solid #828282;"></div><div class="t" style="left:1040px;top:228.5px;line-height:16px;">自动</div>
<div style="position:absolute;left:966px;top:263px;width:329px;height:42px;box-sizing:border-box;border:1px solid #a8a8a8;box-shadow:1px 1px 0 #fff, inset 1px 1px 0 #fff;"></div>
<div class="t" style="left:971px;top:254.5px;line-height:16px;background:#f0f0f0;padding:0 3px">额外Y轴分界</div>
<div class="t" style="left:975px;top:281.5px;line-height:16px;">值1</div>
<div style="position:absolute;left:999px;top:276px;width:47px;height:23px;box-sizing:border-box;background:#fff;border:1px solid #828282;"></div>
<div class="t" style="left:1057px;top:281.5px;line-height:16px;">值2</div>
<div style="position:absolute;left:1080px;top:276px;width:47px;height:23px;box-sizing:border-box;background:#fff;border:1px solid #828282;"></div>
<div class="t" style="left:1138px;top:281.5px;line-height:16px;">值3</div>
<div style="position:absolute;left:1161px;top:276px;width:47px;height:23px;box-sizing:border-box;background:#fff;border:1px solid #828282;"></div>
<div class="t" style="left:1218px;top:281.5px;line-height:16px;">值4</div>
<div style="position:absolute;left:1242px;top:276px;width:47px;height:23px;box-sizing:border-box;background:#fff;border:1px solid #828282;"></div>
<div style="position:absolute;left:888px;top:311px;width:63px;height:23px;box-sizing:border-box;background:linear-gradient(#f8f8f8,#e6e6e6);border:1px solid #6e6e6e;box-shadow:inset 0 0 0 2px #fbfbfb;"></div><div class="t" style="left:888px;width:63px;text-align:center;top:314.5px;line-height:16px;color:#000;letter-spacing:0px">AI写公式</div>
<div style="position:absolute;left:964px;top:311px;width:62px;height:23px;box-sizing:border-box;background:linear-gradient(#f8f8f8,#e6e6e6);border:1px solid #6e6e6e;box-shadow:inset 0 0 0 2px #fbfbfb;"></div><div class="t" style="left:964px;width:62px;text-align:center;top:314.5px;line-height:16px;color:#000;letter-spacing:0px">编辑操作</div>
<div style="position:absolute;left:1030px;top:311px;width:62px;height:23px;box-sizing:border-box;background:linear-gradient(#f8f8f8,#e6e6e6);border:1px solid #6e6e6e;box-shadow:inset 0 0 0 2px #fbfbfb;"></div><div class="t" style="left:1030px;width:62px;text-align:center;top:314.5px;line-height:16px;color:#000;letter-spacing:0px">插入函数</div>
<div style="position:absolute;left:1096px;top:311px;width:62px;height:23px;box-sizing:border-box;background:linear-gradient(#f8f8f8,#e6e6e6);border:1px solid #6e6e6e;box-shadow:inset 0 0 0 2px #fbfbfb;"></div><div class="t" style="left:1096px;width:62px;text-align:center;top:314.5px;line-height:16px;color:#000;letter-spacing:0px">插入资源</div>
<div style="position:absolute;left:1165px;top:311px;width:62px;height:23px;box-sizing:border-box;background:linear-gradient(#f8f8f8,#e6e6e6);border:1px solid #6e6e6e;box-shadow:inset 0 0 0 2px #fbfbfb;"></div><div class="t" style="left:1165px;width:62px;text-align:center;top:314.5px;line-height:16px;color:#a0a0a0;letter-spacing:0px">引入公式</div>
<div style="position:absolute;left:1233px;top:311px;width:62px;height:23px;box-sizing:border-box;background:linear-gradient(#f8f8f8,#e6e6e6);border:1px solid #6e6e6e;box-shadow:inset 0 0 0 2px #fbfbfb;"></div><div class="t" style="left:1233px;width:62px;text-align:center;top:314.5px;line-height:16px;color:#000;letter-spacing:0px">测试公式</div>
<div style="position:absolute;left:532px;top:218px;width:342px;height:120px;box-sizing:border-box;border:1px solid #fff;border-right:2px solid #a0a0a0;border-bottom:2px solid #a0a0a0;"></div>
<div style="position:absolute;left:533px;top:195px;width:58px;height:24px;box-sizing:border-box;background:#f0f0f0;border-top:1px solid #fff;border-left:1px solid #fff;border-right:2px solid #a0a0a0;"></div>
<div class="t" style="left:540px;top:197.5px;line-height:16px;">参数1-4</div>
<div style="position:absolute;left:591px;top:197px;width:53px;height:21px;box-sizing:border-box;border-top:1px solid #fff;border-right:2px solid #a0a0a0;"></div>
<div class="t" style="left:596px;top:200.0px;line-height:16px;">参数5-8</div>
<div style="position:absolute;left:644px;top:197px;width:62px;height:21px;box-sizing:border-box;border-top:1px solid #fff;border-right:2px solid #a0a0a0;"></div>
<div class="t" style="left:649px;top:200.0px;line-height:16px;">参数9-12</div>
<div style="position:absolute;left:706px;top:197px;width:69px;height:21px;box-sizing:border-box;border-top:1px solid #fff;border-right:2px solid #a0a0a0;"></div>
<div class="t" style="left:711px;top:200.0px;line-height:16px;">参数13-16</div>
<div class="t" style="left:552px;top:219.0px;line-height:16px;">参数</div>
<div class="t" style="left:625px;top:219.0px;line-height:16px;">最小</div>
<div class="t" style="left:687px;top:219.0px;line-height:16px;">最大</div>
<div class="t" style="left:753px;top:219.0px;line-height:16px;">缺省</div>
<div class="t" style="left:539px;top:237.5px;line-height:16px;">1</div>
<div style="position:absolute;left:549px;top:236px;width:68px;height:23px;box-sizing:border-box;background:#fff;border:1px solid #828282;"></div>
<div style="position:absolute;left:624px;top:236px;width:56px;height:23px;box-sizing:border-box;background:#fff;border:1px solid #828282;"></div>
<div style="position:absolute;left:687px;top:236px;width:56px;height:23px;box-sizing:border-box;background:#fff;border:1px solid #828282;"></div>
<div style="position:absolute;left:750px;top:236px;width:56px;height:23px;box-sizing:border-box;background:#fff;border:1px solid #828282;"></div>
<div class="t" style="left:539px;top:261.5px;line-height:16px;">2</div>
<div style="position:absolute;left:549px;top:260px;width:68px;height:23px;box-sizing:border-box;background:#fff;border:1px solid #828282;"></div>
<div style="position:absolute;left:624px;top:260px;width:56px;height:23px;box-sizing:border-box;background:#fff;border:1px solid #828282;"></div>
<div style="position:absolute;left:687px;top:260px;width:56px;height:23px;box-sizing:border-box;background:#fff;border:1px solid #828282;"></div>
<div style="position:absolute;left:750px;top:260px;width:56px;height:23px;box-sizing:border-box;background:#fff;border:1px solid #828282;"></div>
<div class="t" style="left:539px;top:285.5px;line-height:16px;">3</div>
<div style="position:absolute;left:549px;top:284px;width:68px;height:23px;box-sizing:border-box;background:#fff;border:1px solid #828282;"></div>
<div style="position:absolute;left:624px;top:284px;width:56px;height:23px;box-sizing:border-box;background:#fff;border:1px solid #828282;"></div>
<div style="position:absolute;left:687px;top:284px;width:56px;height:23px;box-sizing:border-box;background:#fff;border:1px solid #828282;"></div>
<div style="position:absolute;left:750px;top:284px;width:56px;height:23px;box-sizing:border-box;background:#fff;border:1px solid #828282;"></div>
<div class="t" style="left:539px;top:309.5px;line-height:16px;">4</div>
<div style="position:absolute;left:549px;top:308px;width:68px;height:23px;box-sizing:border-box;background:#fff;border:1px solid #828282;"></div>
<div style="position:absolute;left:624px;top:308px;width:56px;height:23px;box-sizing:border-box;background:#fff;border:1px solid #828282;"></div>
<div style="position:absolute;left:687px;top:308px;width:56px;height:23px;box-sizing:border-box;background:#fff;border:1px solid #828282;"></div>
<div style="position:absolute;left:750px;top:308px;width:56px;height:23px;box-sizing:border-box;background:#fff;border:1px solid #828282;"></div>
<div style="position:absolute;left:532px;top:341px;width:767px;height:338px;box-sizing:border-box;border:1px solid #828282;border-right-color:#e0e0e0;border-bottom-color:#e0e0e0;background:#f0f0f0;"></div>
<div style="position:absolute;left:533px;top:347px;width:750px;height:311px;box-sizing:border-box;background:#fff;"></div>
<div style="position:absolute;left:1283px;top:555px;width:15px;height:67px;box-sizing:border-box;background:#c8c8c8;"></div>
<div style="position:absolute;left:551px;top:659px;width:303px;height:14px;box-sizing:border-box;background:#cdcdcd;"></div>
<svg style="position:absolute;left:1284px;top:350px" width="14" height="12"><path d="M3 8L7 4L11 8" stroke="#606060" stroke-width="2" fill="none"/></svg>
<svg style="position:absolute;left:1284px;top:643px" width="14" height="12"><path d="M3 4L7 8L11 4" stroke="#606060" stroke-width="2" fill="none"/></svg>
<svg style="position:absolute;left:536px;top:659px" width="12" height="14"><path d="M8 3L4 7L8 11" stroke="#606060" stroke-width="2" fill="none"/></svg>
<svg style="position:absolute;left:1268px;top:659px" width="12" height="14"><path d="M4 3L8 7L4 11" stroke="#606060" stroke-width="2" fill="none"/></svg>
<div class="code" style="position:absolute;left:534px;top:347px;width:749px;height:311px;overflow:hidden">
<div class="cl"><span class="cj">拉</span><span class="cj">升</span>:=<span style="color:#008000">FILTER</span>(LS,<span style="color:#ff8000">14</span>);</div>
<div class="cl"><span style="color:#008000">STICKLINE</span>(<span class="cj">拉</span><span class="cj">升</span>,<span style="color:#ff8000">100</span>,<span style="color:#ff8000">300</span>,<span style="color:#ff8000">4</span>,<span style="color:#ff8000">0</span>),<span style="color:#008000">COLORYELLOW</span>;</div>
<div class="cl"><span style="color:#008000">DRAWICON</span>(<span class="cj">拉</span><span class="cj">升</span>,<span style="color:#ff8000">330.2</span>,<span style="color:#ff8000">9</span>);</div>
<div class="cl"><span style="color:#008000">DRAWTEXT</span>(<span class="cj">拉</span><span class="cj">升</span>,<span style="color:#ff8000">340</span>,'<span class="cj"><svg width="16" height="16" style="display:block"><path d="M1 13.6L7.6 3.3L14.3 13.6Z" fill="#000"/></svg></span> <span class="cj">主</span><span class="cj">力</span><span class="cj">拉</span><span class="cj">升</span>'),<span style="color:#008000">COLORYELLOW</span>;</div>
<div class="cl">MMM:=<span style="color:#ff8000">1</span>;</div>
<div class="cl">SVOL:=<span style="color:#008000">INTPART</span>(<span style="color:#008000">SUM</span>(<span style="color:#008000">V</span>,<span style="color:#ff8000">0</span>)/<span style="color:#008000">CAPITAL</span>);</div>
<div class="cl">TJ0:=SVOL&gt;<span style="color:#008000">REF</span>(SVOL,<span style="color:#ff8000">1</span>) <span style="color:#008000">OR</span> <span style="color:#008000">BARSSINCE</span>(<span style="color:#008000">CLOSE</span>)=<span style="color:#ff8000">0</span>;</div>
<div class="cl">SF1:=<span style="color:#008000">BARSLAST</span>(TJ0)+<span style="color:#ff8000">1</span>;</div>
<div class="cl">TJJ2:=SF1&lt; <span style="color:#008000">REF</span>(SF1,<span style="color:#ff8000">1</span>);</div>
<div class="cl">S2:=<span style="color:#008000">IF</span>(TJJ2,<span style="color:#008000">REF</span>(SF1,<span style="color:#ff8000">1</span>)+<span style="color:#ff8000">1</span>,SF1);</div>
<div class="cl">S3:=<span style="color:#008000">SUM</span>(TJJ2,<span style="color:#ff8000">0</span>);</div>
<div class="cl">RSV11:=(<span style="color:#008000">CLOSE</span>-<span style="color:#008000">LLV</span>(<span style="color:#008000">LOW</span>,<span style="color:#ff8000">40</span>))/(<span style="color:#008000">HHV</span>(<span style="color:#008000">HIGH</span>,<span style="color:#ff8000">40</span>)-<span style="color:#008000">LLV</span>(<span style="color:#008000">LOW</span>,<span style="color:#ff8000">40</span>))*<span style="color:#ff8000">100</span>;</div>
<div class="cl">ZK1:=<span style="color:#008000">SMA</span>(RSV11,<span style="color:#ff8000">13</span>,<span style="color:#ff8000">1</span>);</div>
<div class="cl">ZD2:=<span style="color:#008000">SMA</span>(ZK1,<span style="color:#ff8000">5</span>,<span style="color:#ff8000">1</span>);</div>
<div class="cl">ZF1:=<span style="color:#0070c0">MA</span>(<span style="color:#008000">EMA</span>(<span style="color:#008000">CLOSE</span>,<span style="color:#ff8000">25</span>)-<span style="color:#008000">EMA</span>(<span style="color:#008000">CLOSE</span>,<span style="color:#ff8000">170</span>),<span style="color:#ff8000">5</span>);</div>
<div class="cl">ZA2:=<span style="color:#008000">EMA</span>(ZF1,<span style="color:#ff8000">25</span>);</div>
<div class="cl"><span style="color:#0070c0"><span class="cj">换</span><span class="cj">手</span></span>:=<span style="color:#008000">V</span>/<span style="color:#008000">CAPITAL</span>*<span style="color:#ff8000">100</span>,LINETHICK0;</div>
<div class="cl">JCD1:=<span style="color:#008000">CROSS</span>(ZK1,ZD2) <span style="color:#008000">AND</span> <span style="color:#008000">REF</span>(ZD2,<span style="color:#ff8000">1</span>)&lt; <span style="color:#ff8000">60</span> <span style="color:#008000">AND</span> <span style="color:#008000">IF</span>(<span style="color:#008000">DATE</span>&lt; <span style="color:#ff8000">1290210</span>,<span style="color:#ff8000">1</span>,<span style="color:#ff8000">0</span>);</div>
<div class="cl">JCD:=<span style="color:#008000">CROSS</span>(<span style="color:#008000">REFX</span>(ZK1,<span style="color:#ff8000">2</span>),<span style="color:#008000">REFX</span>(ZD2,<span style="color:#ff8000">2</span>)) <span style="color:#008000">AND</span> <span style="color:#008000">REF</span>(<span style="color:#008000">REFX</span>(ZD2,<span style="color:#ff8000">2</span>),<span style="color:#ff8000">1</span>)&lt; <span style="color:#ff8000">60</span>;</div>
<div class="cl"><span class="cj">波</span><span class="cj">段</span><span class="cj">低</span><span class="cj">点</span>: <span style="color:#008000">EXIST</span>(JCD,MMM),<span style="color:#008000">COLORYELLOW</span>,<span style="color:#008000">NODRAW</span>;</div>
</div>
<div style="position:absolute;left:532px;top:680px;width:707px;height:117px;box-sizing:border-box;border:1px solid #828282;border-right-color:#a8a8a8;border-bottom:2px solid #a8a8a8;background:#fff;"></div>
<div style="position:absolute;left:1220px;top:681px;width:18px;height:115px;box-sizing:border-box;background:#f3f3f3;"></div>
<div class="t" style="left:537px;top:684.0px;line-height:16px;">测试通过! 代码长度:3730,输出线个数:17</div>
<div style="position:absolute;left:1242px;top:680px;width:55px;height:24px;box-sizing:border-box;background:#f0f0f0;border-top:1px solid #fff;border-left:1px solid #fff;border-right:2px solid #777;border-bottom:2px solid #777;"></div><div class="t" style="left:1242px;width:55px;text-align:center;top:684.0px;line-height:16px;color:#000;letter-spacing:0px">动态翻译</div>
<div style="position:absolute;left:1242px;top:708px;width:55px;height:24px;box-sizing:border-box;background:#f6f6f6;border:1px solid #8a8a8a;border-top:2px solid #6a6a6a;border-left:2px solid #6a6a6a;"></div><div class="t" style="left:1242px;width:55px;text-align:center;top:712.0px;line-height:16px;color:#000;letter-spacing:0px">测试结果</div>
<div style="position:absolute;left:1242px;top:736px;width:55px;height:24px;box-sizing:border-box;background:#f0f0f0;border-top:1px solid #fff;border-left:1px solid #fff;border-right:2px solid #777;border-bottom:2px solid #777;"></div><div class="t" style="left:1242px;width:55px;text-align:center;top:740.0px;line-height:16px;color:#000;letter-spacing:0px">参数精灵</div>
<div style="position:absolute;left:1242px;top:764px;width:55px;height:24px;box-sizing:border-box;background:#f0f0f0;border-top:1px solid #fff;border-left:1px solid #fff;border-right:2px solid #777;border-bottom:2px solid #777;"></div><div class="t" style="left:1242px;width:55px;text-align:center;top:768.0px;line-height:16px;color:#000;letter-spacing:0px">用法注释</div>
</body></html>
